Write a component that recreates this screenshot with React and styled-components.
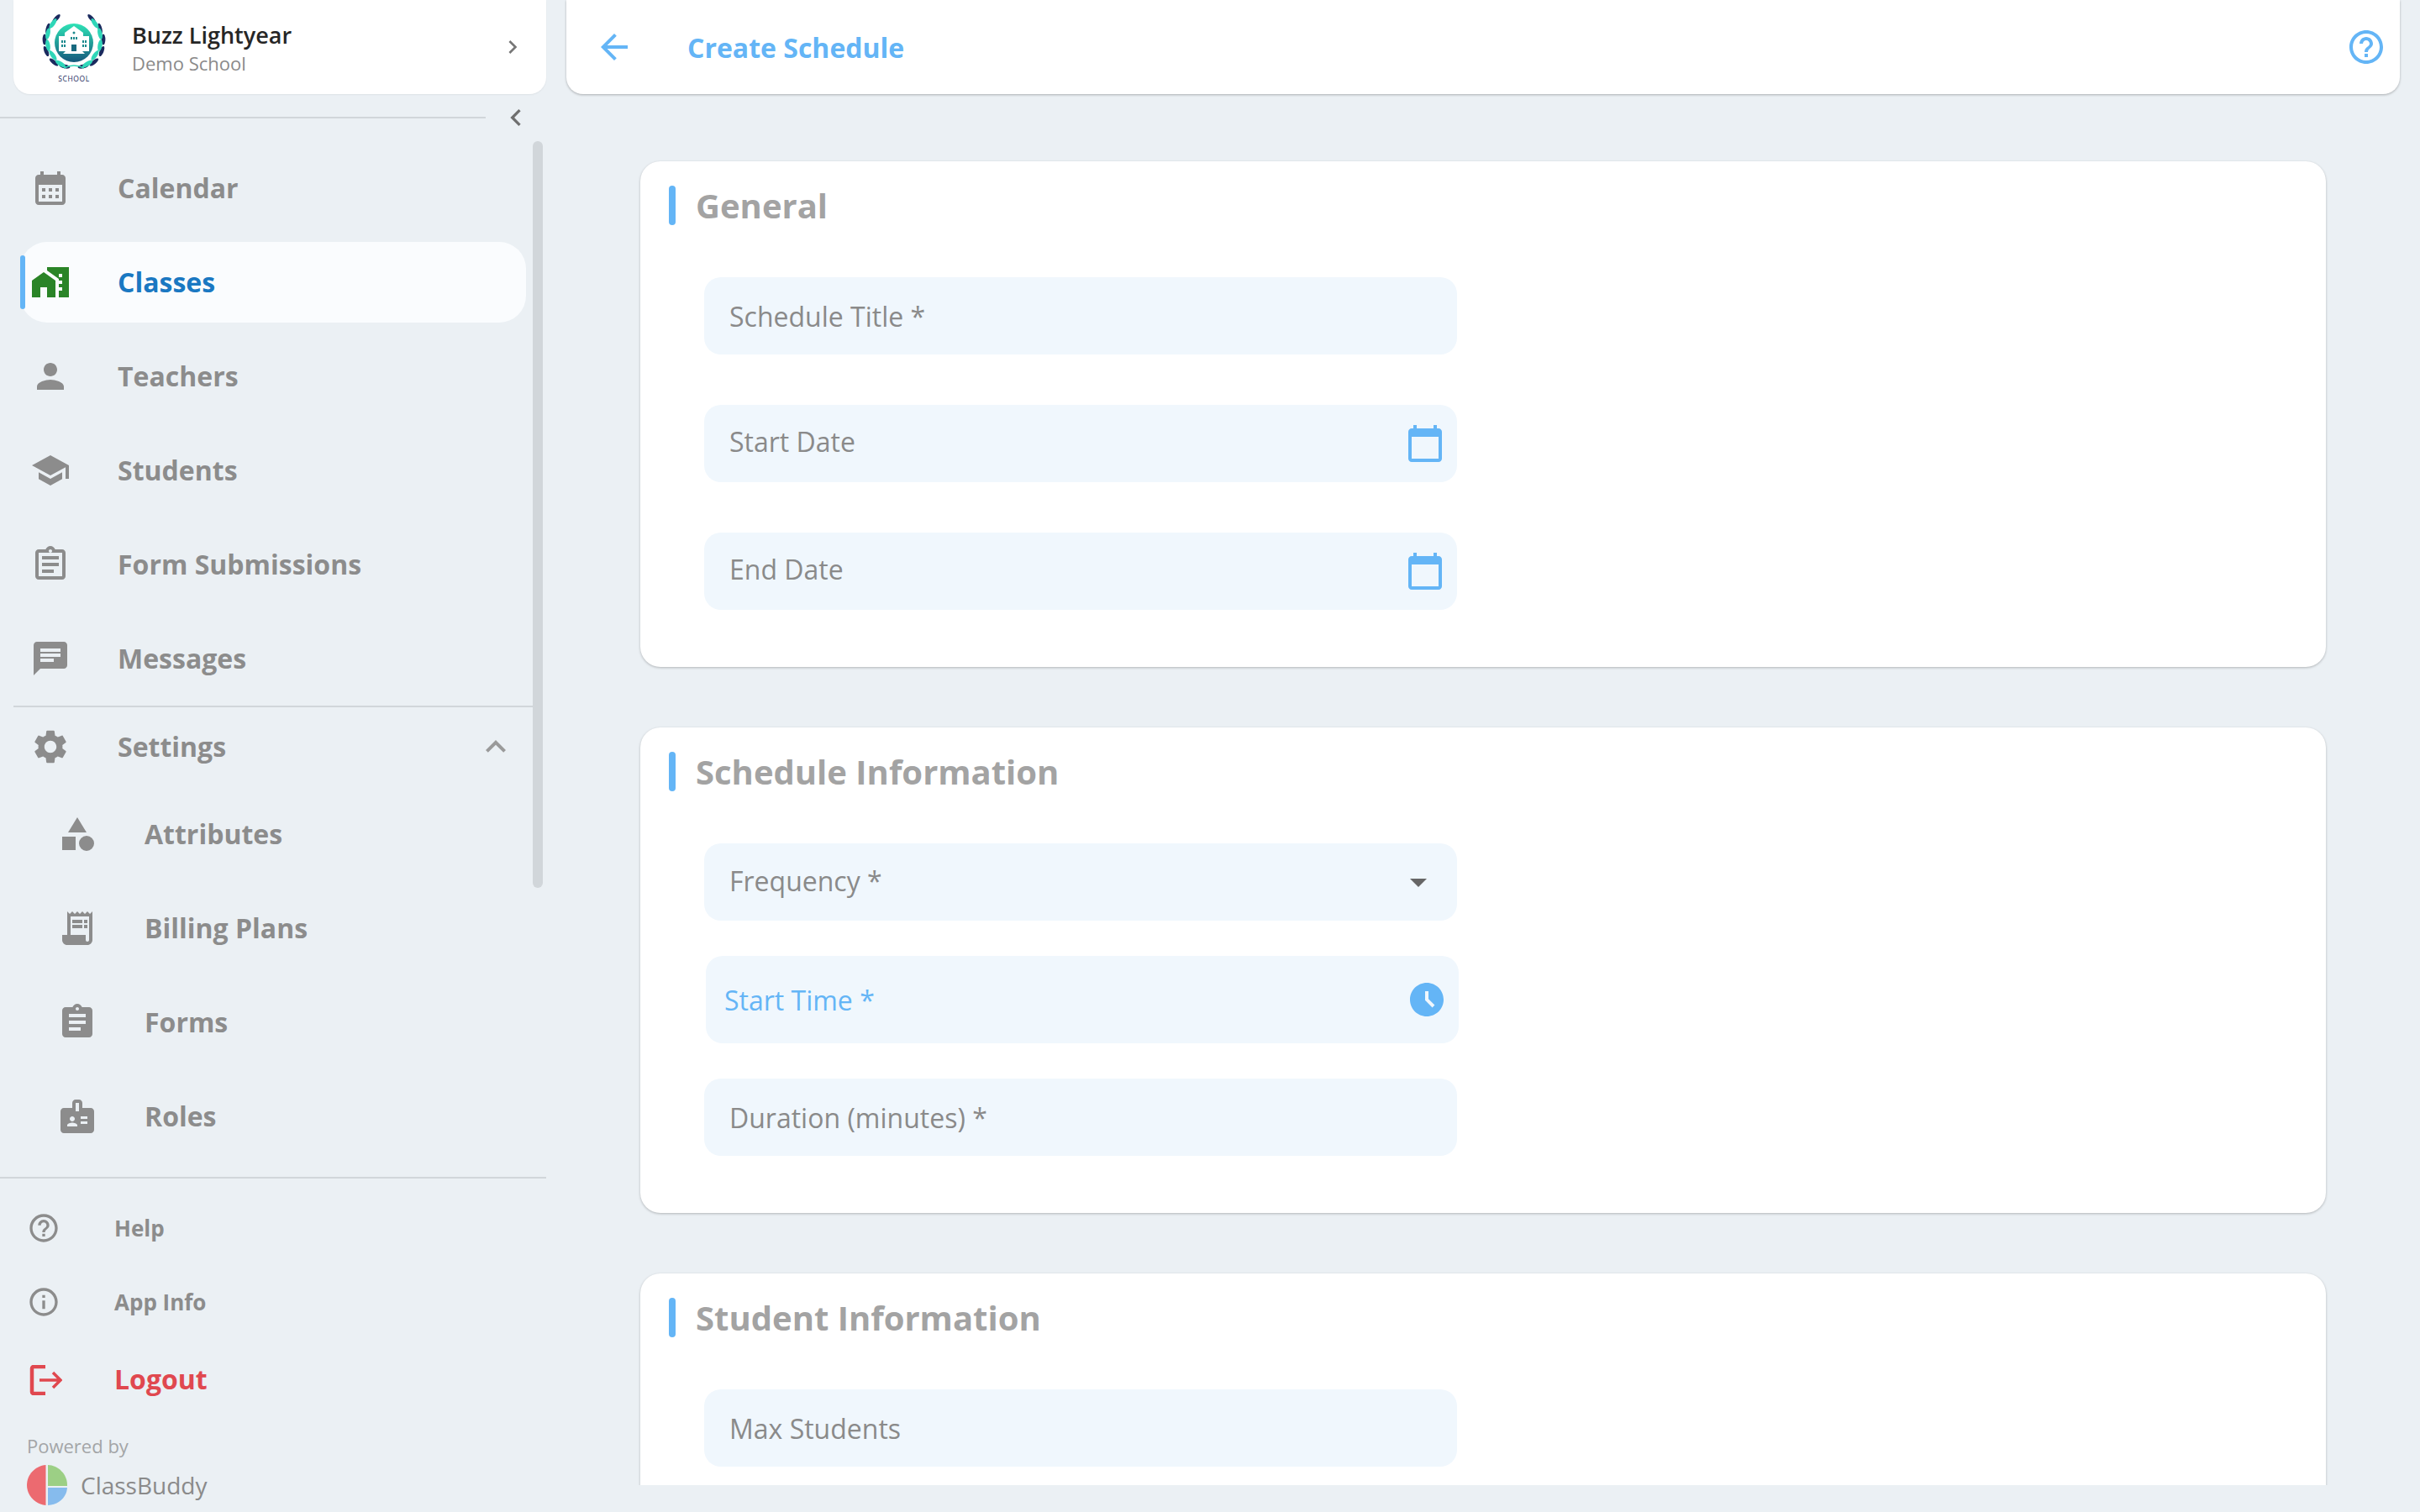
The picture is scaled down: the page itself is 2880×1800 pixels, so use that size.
import React from "react";
import styled, { createGlobalStyle } from "styled-components";

const paths = {
  calendar:
    "M19 4h-1V2h-2v2H8V2H6v2H5c-1.11 0-2 .9-2 2v14c0 1.1.89 2 2 2h14c1.1 0 2-.9 2-2V6c0-1.1-.9-2-2-2zm0 16H5V10h14v10zM9 14H7v-2h2v2zm4 0h-2v-2h2v2zm4 0h-2v-2h2v2zm-8 4H7v-2h2v2zm4 0h-2v-2h2v2zm4 0h-2v-2h2v2z",
  classes:
    "M1 11v10h5v-6h4v6h5V11L8 6zM10 3v1.97l7 5V11h2v2h-2v2h2v2h-2v4h6V3H10zm9 6h-2V7h2v2z",
  person:
    "M12 12c2.21 0 4-1.79 4-4s-1.79-4-4-4-4 1.79-4 4 1.79 4 4 4zm0 2c-2.67 0-8 1.34-8 4v2h16v-2c0-2.66-5.33-4-8-4z",
  school: "M5 13.18v4L12 21l7-3.82v-4L12 17l-7-3.82zM12 3 1 9l11 6 9-4.91V17h2V9L12 3z",
  submissions:
    "M7 15h7v2H7zm0-4h10v2H7zm0-4h10v2H7zM19 3h-4.18C14.4 1.84 13.3 1 12 1c-1.3 0-2.4.84-2.82 2H5c-1.1 0-2 .9-2 2v14c0 1.1.9 2 2 2h14c1.1 0 2-.9 2-2V5c0-1.1-.9-2-2-2zm-7 0c.55 0 1 .45 1 1s-.45 1-1 1-1-.45-1-1 .45-1 1-1zm7 16H5V5h14v14z",
  chat: "M20 2H4c-1.1 0-1.99.9-1.99 2L2 22l4-4h14c1.1 0 2-.9 2-2V4c0-1.1-.9-2-2-2zM6 9h12v2H6V9zm8 5H6v-2h8v2zm4-6H6V6h12v2z",
  settings:
    "M19.14 12.94c.04-.3.06-.61.06-.94 0-.32-.02-.64-.07-.94l2.03-1.58c.18-.14.23-.41.12-.61l-1.92-3.32c-.12-.22-.37-.29-.59-.22l-2.39.96c-.5-.38-1.03-.7-1.62-.94l-.36-2.54c-.04-.24-.24-.41-.48-.41h-3.84c-.24 0-.43.17-.47.41l-.36 2.54c-.59.24-1.13.57-1.62.94l-2.39-.96c-.22-.08-.47 0-.59.22L2.74 8.87c-.12.21-.08.47.12.61l2.03 1.58c-.05.3-.09.63-.09.94s.02.64.07.94l-2.03 1.58c-.18.14-.23.41-.12.61l1.92 3.32c.12.22.37.29.59.22l2.39-.96c.5.38 1.03.7 1.62.94l.36 2.54c.05.24.24.41.48.41h3.84c.24 0 .44-.17.47-.41l.36-2.54c.59-.24 1.13-.56 1.62-.94l2.39.96c.22.08.47 0 .59-.22l1.92-3.32c.12-.22.07-.47-.12-.61l-2.01-1.58zM12 15.6c-1.98 0-3.6-1.62-3.6-3.6s1.62-3.6 3.6-3.6 3.6 1.62 3.6 3.6-1.62 3.6-3.6 3.6z",
  category: "M12 2l-5.5 9h11zM17.5 13a4.5 4.5 0 1 0 0 9 4.5 4.5 0 0 0 0-9zM3 13.5h8v8H3z",
  receipt:
    "M19.5 3.5 18 2l-1.5 1.5L15 2l-1.5 1.5L12 2l-1.5 1.5L9 2 7.5 3.5 6 2v14H3v3c0 1.66 1.34 3 3 3h12c1.66 0 3-1.34 3-3V2l-1.5 1.5zM19 19c0 .55-.45 1-1 1s-1-.45-1-1v-3H8V5h11v14zM9 7h6v2H9zm7 0h2v2h-2zm-7 3h6v2H9zm7 0h2v2h-2z",
  assignment:
    "M19 3h-4.18C14.4 1.84 13.3 1 12 1c-1.3 0-2.4.84-2.82 2H5c-1.1 0-2 .9-2 2v14c0 1.1.9 2 2 2h14c1.1 0 2-.9 2-2V5c0-1.1-.9-2-2-2zm-7 0c.55 0 1 .45 1 1s-.45 1-1 1-1-.45-1-1 .45-1 1-1zm2 14H7v-2h7v2zm3-4H7v-2h10v2zm0-4H7V7h10v2z",
  badge:
    "M20 7h-5V4c0-1.1-.9-2-2-2h-2c-1.1 0-2 .9-2 2v3H4c-1.1 0-2 .9-2 2v11c0 1.1.9 2 2 2h16c1.1 0 2-.9 2-2V9c0-1.1-.9-2-2-2zM9 12c.83 0 1.5.67 1.5 1.5S9.83 15 9 15s-1.5-.67-1.5-1.5S8.17 12 9 12zm3 6H6v-.75c0-1 2-1.5 3-1.5s3 .5 3 1.5V18zm1-9h-2V4h2v5zm5 7.5h-4V15h4v1.5zm0-3h-4V12h4v1.5z",
  help:
    "M11 18h2v-2h-2v2zm1-16C6.48 2 2 6.48 2 12s4.48 10 10 10 10-4.48 10-10S17.52 2 12 2zm0 18c-4.41 0-8-3.59-8-8s3.59-8 8-8 8 3.59 8 8-3.59 8-8 8zm0-14c-2.21 0-4 1.79-4 4h2c0-1.1.9-2 2-2s2 .9 2 2c0 2-3 1.75-3 5h2c0-2.25 3-2.5 3-5 0-2.21-1.79-4-4-4z",
  info:
    "M11 7h2v2h-2zm0 4h2v6h-2zm1-9C6.48 2 2 6.48 2 12s4.48 10 10 10 10-4.48 10-10S17.52 2 12 2zm0 18c-4.41 0-8-3.59-8-8s3.59-8 8-8 8 3.59 8 8-3.59 8-8 8z",
  chevronRight: "M10 6 8.59 7.41 13.17 12l-4.58 4.59L10 18l6-6z",
  chevronLeft: "M15.41 7.41 14 6l-6 6 6 6 1.41-1.41L10.83 12z",
  expandLess: "m12 8-6 6 1.41 1.41L12 10.83l4.59 4.58L18 14z",
  back: "M20 11H7.83l5.59-5.59L12 4l-8 8 8 8 1.41-1.41L7.83 13H20v-2z",
  event:
    "M20 3h-1V1h-2v2H7V1H5v2H4c-1.1 0-2 .9-2 2v16c0 1.1.9 2 2 2h16c1.1 0 2-.9 2-2V5c0-1.1-.9-2-2-2zm0 18H4V8h16v13z",
  clock:
    "M11.99 2C6.47 2 2 6.48 2 12s4.47 10 9.99 10C17.52 22 22 17.52 22 12S17.52 2 11.99 2zm3.3 14.71L11 12.41V7h2v4.59l3.71 3.71-1.42 1.41z",
  dropdown: "M7 10l5 5 5-5z",
};

const mainNav = [
  { label: "Calendar", icon: "calendar" },
  { label: "Classes", icon: "classes", active: true },
  { label: "Teachers", icon: "person" },
  { label: "Students", icon: "school" },
  { label: "Form Submissions", icon: "submissions" },
  { label: "Messages", icon: "chat" },
];

const settingsNav = [
  { label: "Attributes", icon: "category" },
  { label: "Billing Plans", icon: "receipt" },
  { label: "Forms", icon: "assignment" },
  { label: "Roles", icon: "badge" },
];

// leaves of the school crest: [x, y, rotation], left side only, the right is mirrored
const tealLeaves = [
  [42, 27, 35],
  [36, 39, 12],
  [36, 53, -10],
  [42, 65, -35],
  [51, 75, -58],
];
const navyLeaves = [
  [50, 21, 42],
  [40, 33, 15],
  [36, 46, 0],
  [38, 60, -22],
  [47, 73, -50],
  [60, 78, -80],
];

const GlobalStyle = createGlobalStyle`
  html, body {
    margin: 0;
    padding: 0;
    height: 100%;
    overflow: hidden;
    background: #ebf0f4;
    font-family: "Open Sans", "Noto Sans", sans-serif;
  }
  * { box-sizing: border-box; }
`;

const Page = styled.div`
  display: flex;
  height: 100vh;
  background: #ebf0f4;
`;

const Sidebar = styled.aside`
  width: 650px;
  flex-shrink: 0;
  height: 100%;
  display: flex;
  flex-direction: column;
`;

const SchoolCard = styled.div`
  margin-left: 16px;
  height: 112px;
  padding: 0 24px 0 4px;
  display: flex;
  align-items: center;
  gap: 7px;
  background: #fff;
  border-radius: 0 0 20px 20px;
  box-shadow: 0 1px 2px rgba(0, 0, 0, 0.06);
`;

const SchoolText = styled.div`
  flex: 1;
  display: flex;
  flex-direction: column;
`;

const SchoolName = styled.span`
  font-size: 27px;
  line-height: 38px;
  font-weight: 600;
  color: #262626;
`;

const SchoolType = styled.span`
  margin-top: -1px;
  font-size: 22px;
  line-height: 30px;
  color: #8a8a8a;
`;

const CollapseRow = styled.div`
  height: 56px;
  display: flex;
  align-items: center;
`;

const CollapseLine = styled.div`
  flex: 1;
  height: 2px;
  background: #d1d6da;
`;

const CollapseButton = styled.div`
  width: 72px;
  display: flex;
  justify-content: center;
`;

const NavArea = styled.nav`
  position: relative;
  flex: 1;
  overflow: hidden;
`;

const ScrollThumb = styled.div`
  position: absolute;
  top: 0;
  right: 4px;
  width: 12px;
  height: 889px;
  border-radius: 6px;
  background: #d1d6da;
`;

const NavList = styled.div`
  display: flex;
  flex-direction: column;
  gap: 16px;
  padding-top: 8px;
  padding-bottom: 8px;
`;

const SubList = styled(NavList)`
  padding-top: 9px;
`;

const NavRow = styled.div`
  position: relative;
  height: 96px;
  width: 602px;
  margin-left: 24px;
  padding-left: ${(props) => (props.$sub ? "44px" : "12px")};
  display: flex;
  align-items: center;
  gap: 56px;
  border-radius: 32px;
  background: ${(props) => (props.$active ? "#fafcfe" : "transparent")};

  &::before {
    content: "";
    display: ${(props) => (props.$active ? "block" : "none")};
    position: absolute;
    left: 0;
    top: 16px;
    width: 6px;
    height: 64px;
    border-radius: 3px;
    background: #64b5f6;
  }
`;

const NavLabel = styled.span`
  margin-top: -1px;
  font-size: 32px;
  font-weight: 700;
  color: ${(props) => (props.$active ? "#1a78c2" : "#8c8c8c")};
`;

const SettingsRow = styled(NavRow)`
  height: 94px;
  justify-content: flex-start;
`;

const SettingsArrow = styled.div`
  position: absolute;
  right: 12px;
  top: 23px;
  display: flex;
`;

const SectionLine = styled.div`
  height: 2px;
  margin: 0 16px;
  background: #d1d6da;
`;

const BottomNav = styled.div`
  border-top: 2px solid #d1d6da;
  padding: 15px 0 8px 0;
  display: flex;
  flex-direction: column;
`;

const BottomRow = styled.div`
  height: ${(props) => (props.$danger ? "98px" : "88px")};
  padding-left: 32px;
  display: flex;
  align-items: center;
  gap: ${(props) => (props.$danger ? "62px" : "64px")};
`;

const BottomLabel = styled.span`
  margin-top: ${(props) => (props.$danger ? "-3px" : "0")};
  font-size: ${(props) => (props.$danger ? "32px" : "26px")};
  font-weight: 700;
  color: ${(props) => (props.$danger ? "#e0484f" : "#8c8c8c")};
`;

const PoweredBy = styled.div`
  margin: 14px 0 0 32px;
  font-size: 22px;
  line-height: 30px;
  color: #a3a5a7;
`;

const BrandRow = styled.div`
  margin: 8px 0 0 32px;
  display: flex;
  align-items: center;
  gap: 16px;
`;

const BrandName = styled.span`
  font-size: 28px;
  color: #8a8a8a;
`;

const Main = styled.main`
  flex: 1;
  min-width: 0;
  height: 100%;
  padding-bottom: 32px;
  display: flex;
  flex-direction: column;
`;

const TopBar = styled.header`
  height: 112px;
  flex-shrink: 0;
  margin: 0 24px;
  padding: 0 16px 0 33px;
  display: flex;
  align-items: center;
  gap: 63px;
  background: #fff;
  border-radius: 0 0 20px 20px;
  box-shadow: 0 1px 3px rgba(0, 0, 0, 0.28);
`;

const TopTitle = styled.h1`
  flex: 1;
  margin: 0;
  font-size: 32px;
  font-weight: 700;
  color: #64b5f6;
`;

const Content = styled.div`
  flex: 1;
  min-height: 0;
  overflow: hidden;
  padding: 80px 112px 0;
  display: flex;
  flex-direction: column;
  gap: 72px;
`;

const Card = styled.section`
  flex-shrink: 0;
  padding: 29px 0 68px 34px;
  background: #fff;
  border-radius: 24px;
  box-shadow: 0 1px 3px rgba(0, 0, 0, 0.25);
`;

const CardHead = styled.div`
  display: flex;
  align-items: center;
  gap: 24px;
  height: 47px;
`;

const CardMark = styled.div`
  width: 8px;
  height: 47px;
  border-radius: 4px;
  background: #64b5f6;
`;

const CardTitle = styled.h2`
  margin: 0;
  font-size: 40px;
  font-weight: 700;
  color: #a3a3a3;
`;

const FieldList = styled.div`
  margin: 62px 0 0 42px;
  width: 896px;
  display: flex;
  flex-direction: column;
  gap: ${(props) => props.$gap}px;
`;

const Field = styled.div`
  height: ${(props) => (props.$focused ? "104px" : "92px")};
  margin: 0 ${(props) => (props.$focused ? "-2px" : "0")} 0 ${(props) => (props.$focused ? "2px" : "0")};
  padding: 0 14px 0 ${(props) => (props.$focused ? "22px" : "30px")};
  display: flex;
  align-items: center;
  justify-content: space-between;
  background: #f0f7fd;
  border-radius: 20px;
`;

const FieldLabel = styled.span`
  font-size: 32px;
  line-height: 44px;
  margin-top: ${(props) => props.$nudge || 0}px;
  color: ${(props) => (props.$focused ? "#64b5f6" : "#8a8a8a")};
`;

const DropdownSlot = styled.div`
  margin-right: 8px;
`;

const IconSvg = styled.svg`
  display: block;
  flex-shrink: 0;
  fill: ${(props) => props.$color || "#8c8c8c"};
`;

const Icon = ({ name, size = 48, color }) => (
  <IconSvg viewBox="0 0 24 24" width={size} height={size} $color={color}>
    <path d={paths[name]} />
  </IconSvg>
);

const SchoolLogo = () => (
  <svg viewBox="0 0 130 110" width="130" height="110">
    <defs>
      <linearGradient id="crest" x1="0" y1="0" x2="0" y2="1">
        <stop offset="0" stopColor="#2fe3b6" />
        <stop offset="1" stopColor="#15587c" />
      </linearGradient>
    </defs>
    {[false, true].map((mirror) => (
      <g key={String(mirror)} transform={mirror ? "translate(136 0) scale(-1 1)" : undefined}>
        {navyLeaves.map(([x, y, r]) => (
          <ellipse key={`n${x}${y}`} cx={x - 3} cy={y} rx="2.4" ry="6.5" fill="#1b2a5e" transform={`rotate(${r} ${x - 3} ${y})`} />
        ))}
        {tealLeaves.map(([x, y, r]) => (
          <ellipse key={`t${x}${y}`} cx={x + 1} cy={y} rx="2.6" ry="7" fill="#2fd6b8" transform={`rotate(${r} ${x + 1} ${y})`} />
        ))}
      </g>
    ))}
    <path d="M56 80q12-6 24 0" fill="none" stroke="#2fd6b8" strokeWidth="1.6" />
    <circle cx="68" cy="50" r="23" fill="url(#crest)" />
    <path d="M68 30l11 8v4h7v18H50V42h7v-4z" fill="#fff" />
    <path d="M58 60h20l3 3H55z" fill="#fff" />
    <rect x="65" y="52" width="6" height="8" fill="#17697f" />
    <circle cx="68" cy="38" r="1.5" fill="#1d8a8e" />
    <g fill="#1d8a8e">
      <rect x="64" y="43" width="2" height="3" />
      <rect x="67" y="43" width="2" height="3" />
      <rect x="70" y="43" width="2" height="3" />
      <rect x="53" y="47" width="2" height="3" />
      <rect x="56" y="47" width="2" height="3" />
      <rect x="53" y="52" width="2" height="3" />
      <rect x="56" y="52" width="2" height="3" />
      <rect x="78" y="47" width="2" height="3" />
      <rect x="81" y="47" width="2" height="3" />
      <rect x="78" y="52" width="2" height="3" />
      <rect x="81" y="52" width="2" height="3" />
    </g>
    <text x="68" y="96" textAnchor="middle" fontFamily="'Open Sans', sans-serif" fontSize="8.5" letterSpacing="0.6" fill="#1b2a5e">
      SCHOOL
    </text>
  </svg>
);

const LogoutIcon = () => (
  <svg viewBox="0 0 42 36" width="42" height="36">
    <path d="M22 2H8a2 2 0 0 0-2 2v28a2 2 0 0 0 2 2h14" fill="none" stroke="#e0484f" strokeWidth="4.500" />
    <path d="M15 18h24M31 9l9 9-9 9" fill="none" stroke="#e0484f" strokeWidth="3.500" />
  </svg>
);

const BrandLogo = () => (
  <svg viewBox="0 0 48 48" width="48" height="48">
    <path d="M22.500 0v48C10 47 0 36.500 0 24S10 1 22.500 0z" fill="#ec6a70" />
    <path d="M25 0c12 .5 23 10.500 23 24v1H25z" fill="#9ccf85" />
    <path d="M25 27h23c-.5 11-10 20.500-23 21z" fill="#86bbed" />
  </svg>
);

const FormField = ({ label, icon, focused, nudge }) => (
  <Field $focused={focused}>
    <FieldLabel $focused={focused} $nudge={nudge}>{label}</FieldLabel>
    {icon}
  </Field>
);

const NavEntry = ({ item, sub }) => (
  <NavRow $active={item.active} $sub={sub}>
    <Icon name={item.icon} color={item.active ? "#2a8427" : undefined} />
    <NavLabel $active={item.active}>{item.label}</NavLabel>
  </NavRow>
);

export default function App() {
  const eventIcon = <Icon name="event" color="#64b5f6" />;
  const dropdownIcon = (
    <DropdownSlot>
      <Icon name="dropdown" color="#666" />
    </DropdownSlot>
  );

  return (
    <Page>
      <GlobalStyle />
      <Sidebar>
        <SchoolCard>
          <SchoolLogo />
          <SchoolText>
            <SchoolName>Buzz Lightyear</SchoolName>
            <SchoolType>Demo School</SchoolType>
          </SchoolText>
          <Icon name="chevronRight" size={32} color="#777" />
        </SchoolCard>
        <CollapseRow>
          <CollapseLine />
          <CollapseButton>
            <Icon name="chevronLeft" size={40} color="#6f6f6f" />
          </CollapseButton>
        </CollapseRow>
        <NavArea>
          <ScrollThumb />
          <NavList>
            {mainNav.map((item) => (
              <NavEntry key={item.label} item={item} />
            ))}
          </NavList>
          <SectionLine />
          <SettingsRow>
            <Icon name="settings" />
            <NavLabel>Settings</NavLabel>
            <SettingsArrow>
              <Icon name="expandLess" color="#9a9a9a" />
            </SettingsArrow>
          </SettingsRow>
          <SubList>
            {settingsNav.map((item) => (
              <NavEntry key={item.label} item={item} sub />
            ))}
          </SubList>
        </NavArea>
        <BottomNav>
          <BottomRow>
            <Icon name="help" size={40} />
            <BottomLabel>Help</BottomLabel>
          </BottomRow>
          <BottomRow>
            <Icon name="info" size={40} />
            <BottomLabel>App Info</BottomLabel>
          </BottomRow>
          <BottomRow $danger>
            <LogoutIcon />
            <BottomLabel $danger>Logout</BottomLabel>
          </BottomRow>
          <PoweredBy>Powered by</PoweredBy>
          <BrandRow>
            <BrandLogo />
            <BrandName>ClassBuddy</BrandName>
          </BrandRow>
        </BottomNav>
      </Sidebar>
      <Main>
        <TopBar>
          <Icon name="back" color="#64b5f6" />
          <TopTitle>Create Schedule</TopTitle>
          <Icon name="help" color="#64b5f6" />
        </TopBar>
        <Content>
          <Card>
            <CardHead>
              <CardMark />
              <CardTitle>General</CardTitle>
            </CardHead>
            <FieldList $gap={60}>
              <FormField label="Schedule Title *" nudge={2} />
              <FormField label="Start Date" icon={eventIcon} nudge={-4} />
              <FormField label="End Date" icon={eventIcon} nudge={-4} />
            </FieldList>
          </Card>
          <Card>
            <CardHead>
              <CardMark />
              <CardTitle>Schedule Information</CardTitle>
            </CardHead>
            <FieldList $gap={42}>
              <FormField label="Frequency *" icon={dropdownIcon} nudge={-2} />
              <FormField label="Start Time *" icon={<Icon name="clock" color="#64b5f6" />} focused nudge={2} />
              <FormField label="Duration (minutes) *" nudge={1} />
            </FieldList>
          </Card>
          <Card>
            <CardHead>
              <CardMark />
              <CardTitle>Student Information</CardTitle>
            </CardHead>
            <FieldList $gap={42}>
              <FormField label="Max Students" nudge={2} />
            </FieldList>
          </Card>
        </Content>
      </Main>
    </Page>
  );
}
